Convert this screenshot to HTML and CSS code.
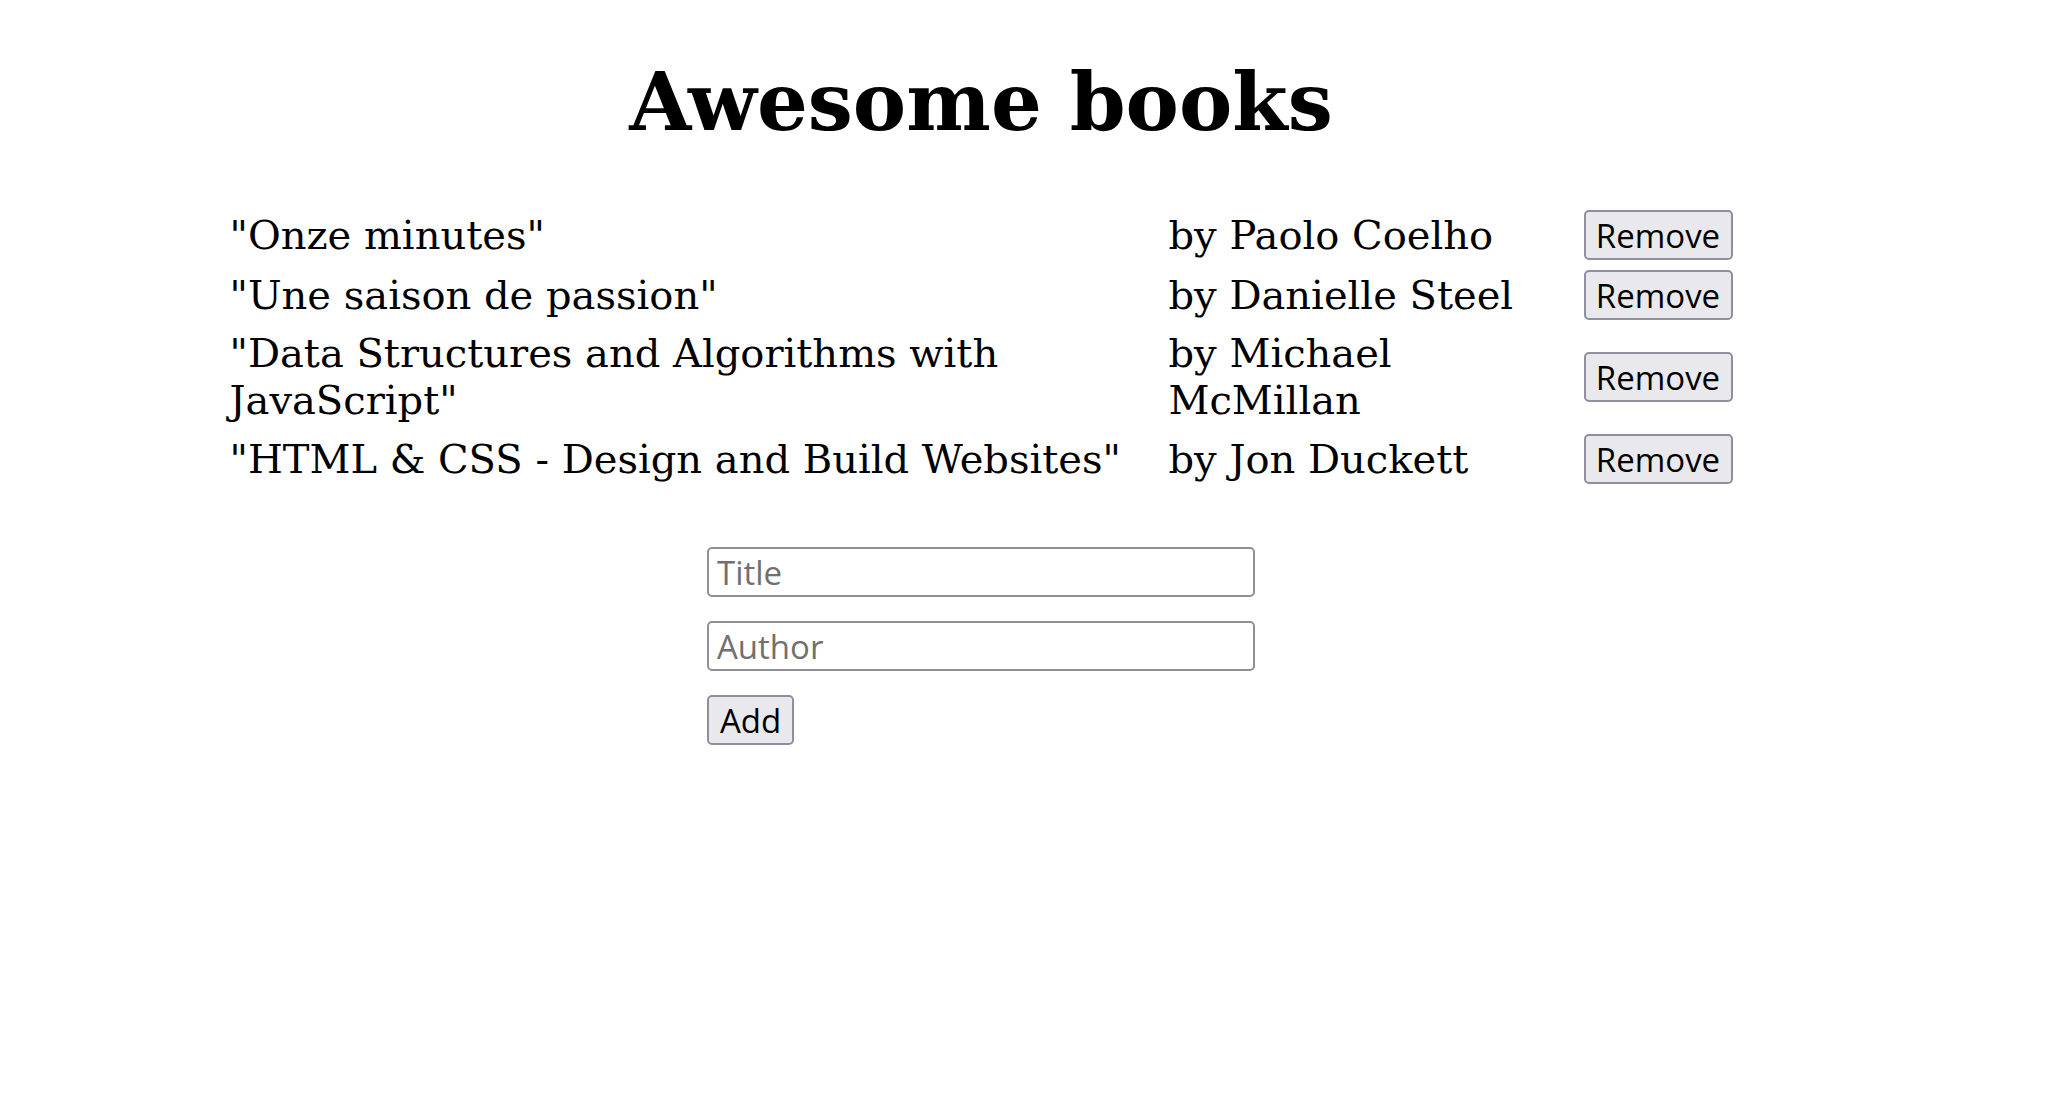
FILE: index.html
```html
<!DOCTYPE html>
<html lang="en">
<head>
<meta charset="utf-8">
<title>Awesome books</title>
<link rel="stylesheet" href="styles.css">
</head>
<body>
<main class="page">
  <h1 class="heading">Awesome books</h1>
  <table class="books">
    <colgroup>
      <col class="col-title">
      <col class="col-author">
      <col class="col-action">
    </colgroup>
    <tbody>
      <tr>
        <td class="cell">"Onze minutes"</td>
        <td class="cell">by Paolo Coelho</td>
        <td class="cell"><button class="btn btn-remove" type="button">Remove</button></td>
      </tr>
      <tr>
        <td class="cell">"Une saison de passion"</td>
        <td class="cell">by Danielle Steel</td>
        <td class="cell"><button class="btn btn-remove" type="button">Remove</button></td>
      </tr>
      <tr>
        <td class="cell">"Data Structures and Algorithms with JavaScript"</td>
        <td class="cell">by Michael McMillan</td>
        <td class="cell"><button class="btn btn-remove" type="button">Remove</button></td>
      </tr>
      <tr>
        <td class="cell">"HTML &amp; CSS - Design and Build Websites"</td>
        <td class="cell">by Jon Duckett</td>
        <td class="cell"><button class="btn btn-remove" type="button">Remove</button></td>
      </tr>
    </tbody>
  </table>
  <form class="add-form">
    <input class="field" type="text" placeholder="Title">
    <input class="field" type="text" placeholder="Author">
    <button class="btn btn-add" type="button">Add</button>
  </form>
</main>
</body>
</html>
```
FILE: styles.css
```css
html, body {
  margin: 0;
  padding: 0;
  background: #ffffff;
}

.page {
  width: 1962px;
  display: flex;
  flex-direction: column;
  align-items: center;
  font-family: "DejaVu Serif", serif;
  color: #000000;
}

.heading {
  margin: 55px 0 56px;
  font-family: "DejaVu Serif", serif;
  font-weight: bold;
  font-size: 80px;
  line-height: normal;
}

.books {
  width: 1503px;
  table-layout: fixed;
  border-collapse: separate;
  border-spacing: 0;
  font-size: 40px;
  line-height: 47px;
}

.col-title { width: 939px; }
.col-author { width: 415px; }
.col-action { width: 149px; }

.cell {
  padding: 5px 0;
  vertical-align: middle;
}

.btn {
  box-sizing: border-box;
  height: 50px;
  margin: 0;
  padding: 0 8px;
  font-family: "Open Sans", "Noto Sans", sans-serif;
  font-size: 33px;
  line-height: 1;
  color: #000000;
  background: #e9e9ed;
  border: 2px solid #8f8f9d;
  border-radius: 5px;
}

.btn-remove {
  width: 149px;
}

.btn-add {
  width: 87px;
}

.add-form {
  margin-top: 58px;
  width: 548px;
  display: flex;
  flex-direction: column;
  align-items: flex-start;
  gap: 24px;
}

.field {
  box-sizing: border-box;
  width: 548px;
  height: 50px;
  margin: 0;
  padding: 0 8px;
  font-family: "Open Sans", "Noto Sans", sans-serif;
  font-size: 33px;
  color: #000000;
  background: #ffffff;
  border: 2px solid #8f8f9d;
  border-radius: 5px;
}

.field::placeholder {
  color: #707070;
  opacity: 1;
}
```
